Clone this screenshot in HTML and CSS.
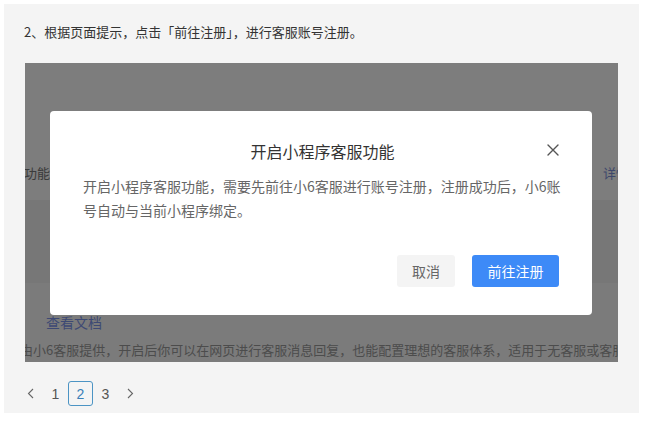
FILE: index.html
```html
<!DOCTYPE html>
<html lang="zh">
<head>
<meta charset="utf-8">
<link rel="stylesheet" href="styles.css">
</head>
<body>
<div class="panel">
  <p class="step">2、根据页面提示，点击「前往注册」，进行客服账号注册。</p>
  <div class="shot">
    <div class="band band-1">
      <span class="cut-left">客服功能</span>
      <span class="cut-right">详情</span>
    </div>
    <div class="band band-2"></div>
    <div class="band band-3">
      <a class="doc-link">查看文档</a>
      <p class="desc">由小6客服提供，开启后你可以在网页进行客服消息回复，也能配置理想的客服体系，适用于无客服或客服系统不完善的商家</p>
    </div>
    <div class="mask"></div>
    <div class="modal">
      <div class="modal-head">
        <h3 class="modal-title">开启小程序客服功能</h3>
        <span class="modal-close">
          <svg width="12" height="12" viewBox="0 0 12 12"><path d="M1 1 L11 11 M11 1 L1 11" stroke="#555" stroke-width="1.4" fill="none" stroke-linecap="round"/></svg>
        </span>
      </div>
      <p class="modal-body">开启小程序客服功能，需要先前往小6客服进行账号注册，注册成功后，小6账号自动与当前小程序绑定。</p>
      <div class="modal-foot">
        <button class="btn btn-cancel">取消</button>
        <button class="btn btn-primary">前往注册</button>
      </div>
    </div>
  </div>
  <div class="pager">
    <span class="pg-item">
      <svg width="7" height="11" viewBox="0 0 7 11"><path d="M6 1 L1.5 5.5 L6 10" stroke="#666" stroke-width="1.1" fill="none"/></svg>
    </span>
    <span class="pg-item">1</span>
    <span class="pg-item pg-active">2</span>
    <span class="pg-item">3</span>
    <span class="pg-item">
      <svg width="7" height="11" viewBox="0 0 7 11"><path d="M1 1 L5.5 5.5 L1 10" stroke="#666" stroke-width="1.1" fill="none"/></svg>
    </span>
  </div>
</div>
</body>
</html>
```
FILE: styles.css
```css
* { box-sizing: border-box; }
html, body { margin: 0; padding: 0; background: #fff; }
body {
  font-family: "Noto Sans CJK SC", "Noto Sans", sans-serif;
  color: #333;
}
.panel {
  margin: 4px 0 0 4px;
  width: 635px;
  height: 409px;
  background: #f4f4f4;
  display: flex;
  flex-direction: column;
}
.step {
  margin: 0;
  padding: 18px 0 0 20px;
  font-size: 13px;
  line-height: 20px;
  color: #333;
}
.shot {
  position: relative;
  margin: 21px 0 0 21px;
  width: 593px;
  height: 299px;
  overflow: hidden;
  display: flex;
  flex-direction: column;
}
.band { width: 100%; }
.band-1 {
  height: 137px;
  background: #fafafa;
  display: flex;
  justify-content: space-between;
  align-items: flex-end;
  padding-bottom: 17px;
  font-size: 13px;
  line-height: 20px;
  white-space: nowrap;
}
.cut-left { color: #777; margin-left: -27px; }
.cut-right { color: #7a8fd8; margin-right: -11px; }
.band-2 { height: 83px; background: #efefef; }
.band-3 {
  flex: 1;
  background: #f6f6f6;
  padding: 29px 0 0 0;
}
.doc-link {
  display: block;
  margin-left: 21px;
  font-size: 14px;
  line-height: 20px;
  color: #7b93e8;
}
.desc {
  margin: 8px 0 0 -5px;
  font-size: 13px;
  line-height: 20px;
  color: #999;
  white-space: nowrap;
}
.mask {
  position: absolute;
  inset: 0;
  background: rgba(0, 0, 0, 0.5);
}
.modal {
  position: absolute;
  left: 25px;
  top: 48px;
  width: 542px;
  height: 204px;
  background: #fff;
  border-radius: 4px;
  padding: 28px 30px 0 33px;
  display: flex;
  flex-direction: column;
}
.modal-head {
  position: relative;
  height: 24px;
}
.modal-title {
  margin: 0;
  text-align: center;
  font-size: 16px;
  font-weight: normal;
  line-height: 24px;
  color: #333;
}
.modal-close {
  position: absolute;
  right: 3px;
  top: 5px;
  width: 12px;
  height: 12px;
  display: flex;
}
.modal-body {
  margin: 11px 0 0 0;
  font-size: 14px;
  line-height: 24px;
  color: #666;
}
.modal-foot {
  margin-top: auto;
  margin-bottom: 28px;
  display: flex;
  justify-content: flex-end;
  gap: 17px;
  padding-right: 3px;
}
.btn {
  height: 32px;
  border: none;
  border-radius: 3px;
  font-family: inherit;
  font-size: 14px;
  padding: 0;
}
.btn-cancel { width: 58px; background: #f4f4f4; color: #666; }
.btn-primary { width: 87px; background: #3d8af7; color: #fff; }
.pager {
  margin: 19px 0 0 14px;
  display: flex;
  align-items: center;
}
.pg-item {
  width: 25px;
  height: 25px;
  display: flex;
  align-items: center;
  justify-content: center;
  font-size: 14px;
  color: #555;
  font-family: "Liberation Sans", sans-serif;
}
.pg-active {
  border: 1px solid #4c94c4;
  border-radius: 3px;
  color: #3a80b8;
}
```
